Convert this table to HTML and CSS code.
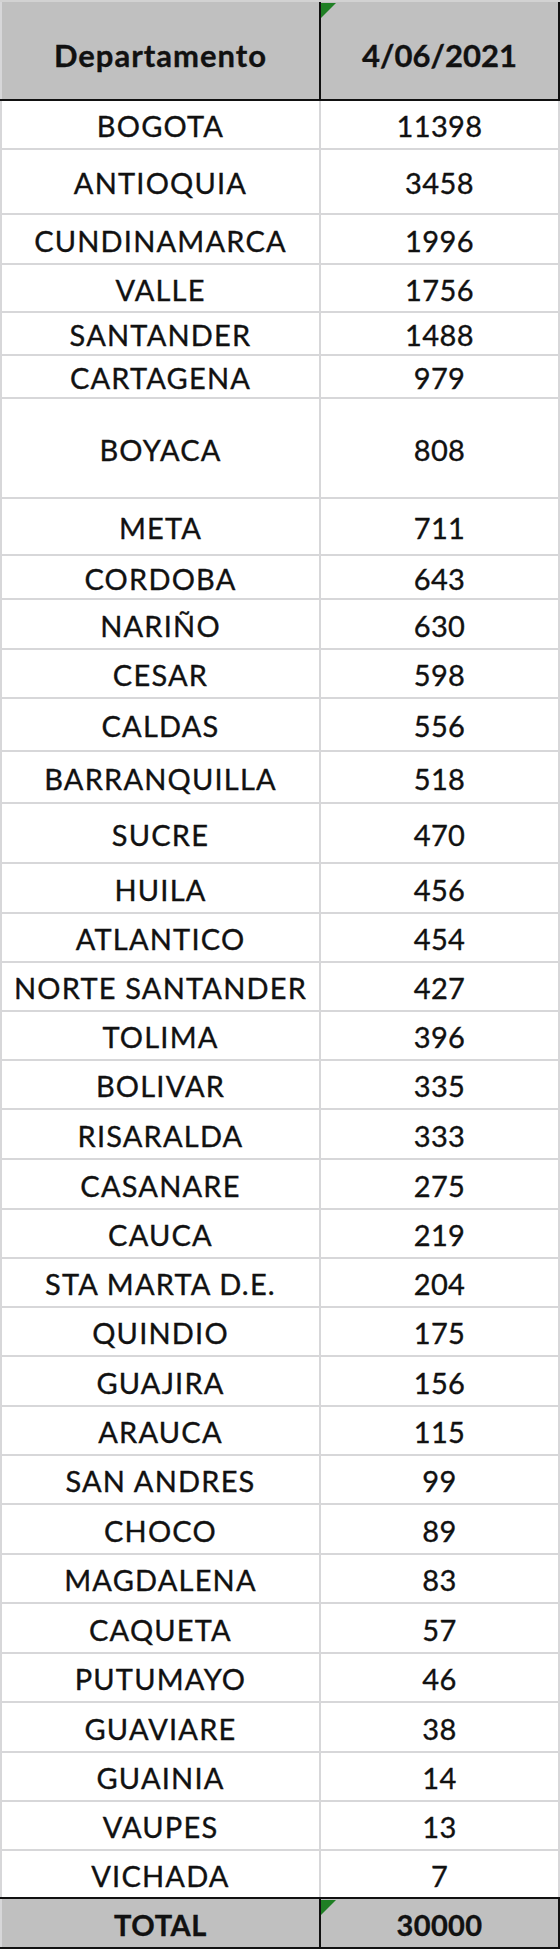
FILE: index.html
```html
<!DOCTYPE html>
<html lang="es">
<head>
<meta charset="utf-8">
<title>Departamento 4/06/2021</title>
<link rel="stylesheet" href="styles.css">
</head>
<body>
<div class="sheet">
  <div class="row head">
    <div class="c1">Departamento</div>
    <div class="c2"><span class="flag"></span>4/06/2021</div>
  </div>
  <div class="row">
    <div class="c1">BOGOTA</div><div class="c2">11398</div>
  </div>
  <div class="row h65">
    <div class="c1">ANTIOQUIA</div><div class="c2">3458</div>
  </div>
  <div class="row h50">
    <div class="c1">CUNDINAMARCA</div><div class="c2">1996</div>
  </div>
  <div class="row h48">
    <div class="c1">VALLE</div><div class="c2">1756</div>
  </div>
  <div class="row h43">
    <div class="c1">SANTANDER</div><div class="c2">1488</div>
  </div>
  <div class="row h43">
    <div class="c1">CARTAGENA</div><div class="c2">979</div>
  </div>
  <div class="row h100">
    <div class="c1">BOYACA</div><div class="c2">808</div>
  </div>
  <div class="row h57">
    <div class="c1">META</div><div class="c2">711</div>
  </div>
  <div class="row h44">
    <div class="c1">CORDOBA</div><div class="c2">643</div>
  </div>
  <div class="row h50">
    <div class="c1">NARIÑO</div><div class="c2">630</div>
  </div>
  <div class="row">
    <div class="c1">CESAR</div><div class="c2">598</div>
  </div>
  <div class="row h53">
    <div class="c1">CALDAS</div><div class="c2">556</div>
  </div>
  <div class="row h52">
    <div class="c1">BARRANQUILLA</div><div class="c2">518</div>
  </div>
  <div class="row h60">
    <div class="c1">SUCRE</div><div class="c2">470</div>
  </div>
  <div class="row h50">
    <div class="c1">HUILA</div><div class="c2">456</div>
  </div>
  <div class="row">
    <div class="c1">ATLANTICO</div><div class="c2">454</div>
  </div>
  <div class="row">
    <div class="c1">NORTE SANTANDER</div><div class="c2">427</div>
  </div>
  <div class="row">
    <div class="c1">TOLIMA</div><div class="c2">396</div>
  </div>
  <div class="row">
    <div class="c1">BOLIVAR</div><div class="c2">335</div>
  </div>
  <div class="row h50">
    <div class="c1">RISARALDA</div><div class="c2">333</div>
  </div>
  <div class="row h50">
    <div class="c1">CASANARE</div><div class="c2">275</div>
  </div>
  <div class="row">
    <div class="c1">CAUCA</div><div class="c2">219</div>
  </div>
  <div class="row">
    <div class="c1">STA MARTA D.E.</div><div class="c2">204</div>
  </div>
  <div class="row">
    <div class="c1">QUINDIO</div><div class="c2">175</div>
  </div>
  <div class="row h50">
    <div class="c1">GUAJIRA</div><div class="c2">156</div>
  </div>
  <div class="row">
    <div class="c1">ARAUCA</div><div class="c2">115</div>
  </div>
  <div class="row">
    <div class="c1">SAN ANDRES</div><div class="c2">99</div>
  </div>
  <div class="row h50">
    <div class="c1">CHOCO</div><div class="c2">89</div>
  </div>
  <div class="row">
    <div class="c1">MAGDALENA</div><div class="c2">83</div>
  </div>
  <div class="row h50">
    <div class="c1">CAQUETA</div><div class="c2">57</div>
  </div>
  <div class="row">
    <div class="c1">PUTUMAYO</div><div class="c2">46</div>
  </div>
  <div class="row h50">
    <div class="c1">GUAVIARE</div><div class="c2">38</div>
  </div>
  <div class="row">
    <div class="c1">GUAINIA</div><div class="c2">14</div>
  </div>
  <div class="row">
    <div class="c1">VAUPES</div><div class="c2">13</div>
  </div>
  <div class="row last">
    <div class="c1">VICHADA</div><div class="c2">7</div>
  </div>
  <div class="row total">
    <div class="c1">TOTAL</div>
    <div class="c2"><span class="flag"></span>30000</div>
  </div>
</div>
</body>
</html>
```

FILE: styles.css
```css
html, body {
  margin: 0;
  padding: 0;
  background: #ffffff;
}

.sheet {
  width: 560px;
  font-family: Lato, "Open Sans", "DejaVu Sans", sans-serif;
  font-size: 29px;
  color: #111111;
  -webkit-text-stroke: 0.35px #111111;
}

.row {
  display: grid;
  grid-template-columns: 319px 241px;
  height: 49px;
  box-sizing: border-box;
  border-bottom: 2px solid #d7d7d9;
}

.row > div {
  box-sizing: border-box;
  display: flex;
  align-items: center;
  justify-content: center;
  white-space: nowrap;
  position: relative;
  padding-top: 2px;
}

.c1 {
  border-left: 2px solid #d7d7d9;
  letter-spacing: 1.2px;
}

.c2 {
  border-left: 2px solid #d7d7d9;
  border-right: 2px solid #d7d7d9;
  letter-spacing: 0.4px;
}

.h43 { height: 43px; }
.h44 { height: 44px; }
.h48 { height: 48px; }
.h50 { height: 50px; }
.h52 { height: 52px; }
.h53 { height: 53px; }
.h57 { height: 57px; }
.h60 { height: 60px; }
.h65 { height: 65px; }
.h100 { height: 100px; }

.last {
  height: 46px;
  border-bottom: none;
}

.head {
  height: 101px;
  background: #c0c0c0;
  border-top: 2px solid #d2d2d2;
  border-bottom: 2px solid #111111;
  font-weight: 700;
  font-size: 31px;
}

.head > div {
  padding-top: 8px;
}

.head .c1 {
  letter-spacing: 1px;
}

.head .c2 {
  letter-spacing: 0;
}

.head .c2,
.total .c2 {
  border-left-color: #111111;
  border-right-color: #111111;
}

.total {
  height: 52px;
  background: #c0c0c0;
  border-top: 2px solid #111111;
  border-bottom: 2px solid #111111;
  font-weight: 700;
}

.total .c1 {
  letter-spacing: 0.6px;
}

.flag {
  position: absolute;
  left: 0;
  top: 1px;
  width: 0;
  height: 0;
  border-top: 15px solid #1f7f24;
  border-right: 15px solid transparent;
}
```
